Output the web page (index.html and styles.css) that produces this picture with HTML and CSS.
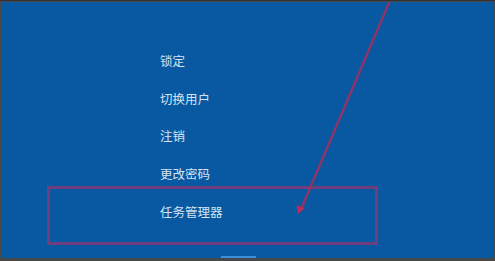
FILE: index.html
```html
<!DOCTYPE html>
<html>
<head>
<meta charset="utf-8">
<link rel="stylesheet" href="styles.css">
</head>
<body>
<div class="frame">
  <div class="screen">
    <ul class="menu">
      <li>锁定</li>
      <li>切换用户</li>
      <li>注销</li>
      <li>更改密码</li>
      <li>任务管理器</li>
    </ul>
    <div class="highlight"></div>
    <svg class="arrow" width="495" height="261" viewBox="0 0 495 261">
      <line x1="391" y1="-2" x2="302" y2="207" stroke="#8e3468" stroke-width="2.5" stroke-linecap="round"/>
      <polygon points="298,214 296.5,205 305,208" fill="#b82c58"/>
    </svg>
    <div class="taskbar-mark"></div>
  </div>
</div>
</body>
</html>
```
FILE: styles.css
```css
html, body {
  margin: 0;
  padding: 0;
  background: #464646;
}
.frame {
  width: 495px;
  height: 261px;
  background: #474747;
  box-sizing: border-box;
  padding: 1px 2px 3px 1px;
  border-top: 1px solid #333;
}
.screen {
  position: relative;
  height: 100%;
  background: #0859a1;
  overflow: hidden;
}
.menu {
  list-style: none;
  margin: 0;
  padding: 40px 0 0 159px;
  font-family: "Noto Sans CJK SC", "Noto Sans", sans-serif;
  font-size: 12.5px;
  color: #d5e3f0;
}
.menu li {
  height: 37.7px;
  line-height: 37.7px;
}
.highlight {
  position: absolute;
  left: 46px;
  top: 184px;
  width: 325px;
  height: 53px;
  border: 3px solid #6e3f7c;
}
.arrow {
  position: absolute;
  left: -1px;
  top: -2px;
}
.taskbar-mark {
  position: absolute;
  left: 220px;
  bottom: 0;
  width: 35px;
  height: 2px;
  background: #3a8fdc;
}
```
